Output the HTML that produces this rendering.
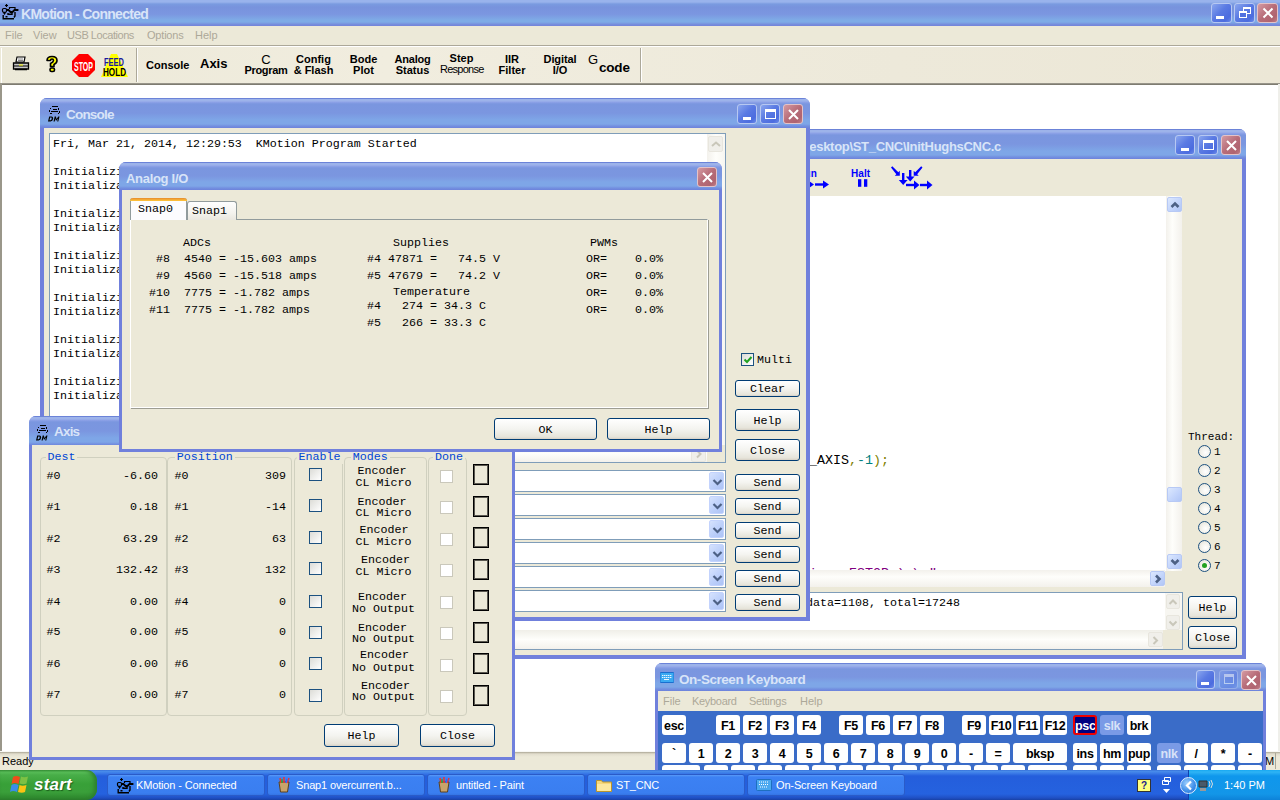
<!DOCTYPE html>
<html><head><meta charset="utf-8">
<style>
*{margin:0;padding:0;box-sizing:border-box}
html,body{width:1280px;height:800px;overflow:hidden;background:#fff;font-family:"Liberation Sans",sans-serif}
.a{position:absolute}
.m{position:absolute;font-family:"Liberation Mono",monospace;font-size:11.67px;white-space:pre;color:#000;line-height:14px}
.tbg{background:linear-gradient(#6B83D8 0,#6B83D8 1px,#9DB3EA 1px,#9DB3EA 3px,#8FA3E8 4px,#7A96DF 6px,#7B96E0 15px,#7EA6E7 22px,#7EA6E7 26px,#7390E0 28px,#6D82DB 30px)}
.win{position:absolute;background:#7080DC;border-radius:7px 7px 0 0;overflow:hidden}
.tb{position:absolute;left:0;top:0;right:0;height:30px}
.cl{position:absolute;left:4px;top:30px;right:4px;bottom:4px;background:#ECE9D8;overflow:hidden}
.ttl{position:absolute;top:8px;font-weight:bold;font-size:13px;color:#D8E4F8;white-space:pre;line-height:14px}
.xb{position:absolute;width:20px;height:20px;border:1px solid #B7C8F2;border-radius:3px;background:linear-gradient(135deg,#8AA6EE 0,#5A7AE3 45%,#4C6CDF 80%,#6A8AE8)}
.xc{border-color:#E3C3C8;background:linear-gradient(135deg,#D49AA2 0,#B76C78 50%,#B06470 80%,#BE7E88)}
.btn{position:absolute;padding-top:1px;border:1px solid #003C74;border-radius:3px;background:linear-gradient(#FFFFFF,#F4F4F0 50%,#E6E4DA 90%,#D6D0C5);font-family:"Liberation Mono",monospace;font-size:11.67px;text-align:center;color:#000;line-height:16px}
.tbt{position:absolute;font-weight:bold;font-size:11px;white-space:pre;line-height:11px;text-align:center;color:#000}
.mn{position:absolute;top:28px;font-size:11px;color:#ACA899;white-space:pre;line-height:14px}
.tk{position:absolute;top:774px;letter-spacing:-0.15px;height:22px;width:158px;border-radius:3px;background:linear-gradient(#5A9AF8 0,#3C81F3 2px,#3A7EF0 18px,#2E6AD9 22px);border:1px solid #2A5BC8;color:#fff;font-size:11px;line-height:20px;padding-left:28px;white-space:pre}
.sbb{width:15px;height:15px;border:1px solid #B7C9F5;border-radius:2px;background:linear-gradient(135deg,#DCE8FE,#C1D3FB 60%,#B1C6F6)}
.sbd{width:15px;height:17px;border:1px solid #E8E6DE;border-radius:2px;background:#F0EFEA}
.rad{position:absolute;width:13px;height:13px;border-radius:50%;border:1px solid #1C5180;background:radial-gradient(circle at 60% 60%,#FFFFFF,#F2F1EB 50%,#DCDAD0)}
.cmb{border:1px solid #7F9DB9;background:#fff}
.ddb{width:15px;height:18px;border-radius:2px;background:linear-gradient(135deg,#D5E2FD,#BACEFA 60%,#ADC3F5);border:1px solid #C3D3FD}
.gb{position:absolute;border:1px solid #D0D0BF;border-radius:4px}
.cb{position:absolute;width:13px;height:13px;border:1px solid #1C5180;background:linear-gradient(135deg,#DCDCD7,#FFFFFF)}
.cbd{position:absolute;width:13px;height:13px;border:1px solid #CAC8BB;background:#fff}
.key{position:absolute;padding-top:1px;background:#fff;border-radius:3px;font-weight:bold;font-size:12.5px;text-align:center;line-height:20px;color:#000;letter-spacing:-0.3px;white-space:pre;overflow:hidden}
</style></head><body>
<!-- ===== main title ===== -->
<div class="a" style="left:0;top:0;width:1280px;height:26px;background:linear-gradient(#99B3EC 0,#99B3EC 2px,#7A9BE0 4px,#7893DD 7px,#7B96E0 14px,#7EABE6 20px,#7EABE6 22px,#7587DA 25px,#7386DA 26px)"></div>
<svg class="a" style="left:0px;top:2px" width="20" height="19" viewBox="0 0 20 19"><g fill="none" stroke="#000" stroke-width="1.2"><path d="M5 3.5h3M6.5 2v3"/><rect x="2.5" y="6.5" width="4" height="3.8" rx="1.2"/><path d="M3.5 10.5l1 1.5 1-1.5M9.5 7V5.5h5.5V7"/><path d="M6.5 8h2l2 2h2l2-2h3V7" stroke-width="1.8"/></g><g fill="none" stroke="#000" stroke-width="1.4"><path d="M8 11v1.2h4V11M15 10v4l-1 1.5M3.2 13v3.8h10.8M5.5 14.8h2"/></g></svg>
<div class="ttl" style="left:21px;top:6.5px;font-size:14px;letter-spacing:-0.72px">KMotion - Connected</div>
<div class="xb" style="left:1211px;top:3px;width:21px;height:20px"><div class="a" style="left:4px;top:12px;width:8px;height:3px;background:#fff"></div></div>
<div class="xb" style="left:1234px;top:3px;width:21px;height:20px"><div class="a" style="left:8px;top:3px;width:8px;height:7px;border:1px solid #fff;border-top-width:2px"></div><div class="a" style="left:4px;top:7px;width:8px;height:7px;border:1px solid #fff;border-top-width:2px;background:#5070E0"></div></div>
<div class="xb xc" style="left:1257px;top:3px;width:21px;height:20px"><svg class="a" style="left:4px;top:3px" width="12" height="12"><path d="M1.5 1.5l9 9M10.5 1.5l-9 9" stroke="#fff" stroke-width="2"/></svg></div>
<!-- ===== menu ===== -->
<div class="a" style="left:0;top:26px;width:1280px;height:20px;background:#ECE9D8"></div>
<div class="mn" style="left:5px">File</div>
<div class="mn" style="left:33px">View</div>
<div class="mn" style="left:67px;letter-spacing:-0.45px">USB Locations</div>
<div class="mn" style="left:147px;letter-spacing:-0.2px">Options</div>
<div class="mn" style="left:195px">Help</div>
<div class="a" style="left:0;top:45px;width:1280px;height:1px;background:#ACA899"></div>
<div class="a" style="left:0;top:46px;width:1280px;height:1px;background:#fff"></div>
<!-- ===== toolbar ===== -->
<div class="a" style="left:0;top:47px;width:1280px;height:37px;background:linear-gradient(90deg,#ECE9D8,#F1EDDF 30%,#EDE9DA 70%,#ECE7D6)"></div>
<div class="a" style="left:0;top:83px;width:1280px;height:2px;background:linear-gradient(#A5A297,#716F64)"></div>
<div class="a" style="left:1px;top:48px;width:1px;height:35px;background:#fff"></div>
<div class="a" style="left:136px;top:48px;width:1px;height:34px;background:#ACA899"></div>
<div class="a" style="left:137px;top:48px;width:1px;height:34px;background:#fff"></div>
<div class="a" style="left:640px;top:48px;width:1px;height:34px;background:#ACA899"></div>
<div class="a" style="left:641px;top:48px;width:1px;height:34px;background:#fff"></div>
<!-- printer -->
<svg class="a" style="left:12px;top:56px" width="18" height="16" viewBox="0 0 18 16"><path d="M5 1h8l-1 5H4z" fill="#fff" stroke="#000" stroke-width="1.2"/><path d="M6 3h5M6 4.5h5" stroke="#888"/><path d="M1.5 7h15v6h-15z" fill="#C8C8C8" stroke="#000" stroke-width="1.3"/><path d="M2 10h14" stroke="#000"/><path d="M7 9h4" stroke="#FF0"/><path d="M3 13.5h12" stroke="#000" stroke-width="1.5"/></svg>
<!-- help ? -->
<svg class="a" style="left:45px;top:55px" width="14" height="18" viewBox="0 0 14 18"><path d="M2 5.5Q2 1.5 7 1.5T12 5.5Q12 8 9 9.5V11.5H5.5V8.5Q8.5 7 8.5 5.5T7 4T5.5 5.5z" fill="#FF0" stroke="#000" stroke-width="1.6" stroke-linejoin="round"/><rect x="5" y="13" width="4.5" height="3.5" rx="1.5" fill="#FF0" stroke="#000" stroke-width="1.6"/></svg>
<!-- stop -->
<svg class="a" style="left:72px;top:54px" width="23" height="23" viewBox="0 0 23 23"><path d="M7 0h9l7 7v9l-7 7H7l-7-7V7z" fill="#F00"/><text x="11.5" y="16.5" font-family="Liberation Sans" font-weight="bold" font-size="12" fill="#fff" text-anchor="middle" textLength="19" lengthAdjust="spacingAndGlyphs">STOP</text></svg>
<!-- feed hold -->
<svg class="a" style="left:101px;top:53px" width="27" height="24" viewBox="0 0 27 24"><path d="M10 1h6l11 23H0z" fill="#FF0"/><text x="13" y="13" font-family="Liberation Sans" font-weight="bold" font-size="10" fill="#1A1A9A" text-anchor="middle" textLength="20" lengthAdjust="spacingAndGlyphs">FEED</text><text x="13.5" y="23" font-family="Liberation Sans" font-weight="bold" font-size="10" fill="#000" text-anchor="middle" textLength="23" lengthAdjust="spacingAndGlyphs">HOLD</text></svg>
<div class="tbt" style="left:146px;top:60px">Console</div>
<div class="tbt" style="left:200px;top:57px;font-size:13px;line-height:13px">Axis</div>
<div class="tbt" style="left:244px;top:54px;font-weight:normal;font-size:13px;line-height:12px;width:44px">C</div>
<div class="tbt" style="left:244px;top:65px;width:44px;letter-spacing:-0.3px">Program</div>
<div class="tbt" style="left:293px;top:54px;width:41px">Config</div>
<div class="tbt" style="left:293px;top:65px;width:41px">&amp; Flash</div>
<div class="tbt" style="left:349px;top:54px;width:29px">Bode</div>
<div class="tbt" style="left:349px;top:65px;width:29px">Plot</div>
<div class="tbt" style="left:394px;top:54px;width:37px;letter-spacing:-0.2px">Analog</div>
<div class="tbt" style="left:394px;top:65px;width:37px">Status</div>
<div class="tbt" style="left:440px;top:53px;width:43px">Step</div>
<div class="tbt" style="left:440px;top:64px;width:43px;font-weight:normal;letter-spacing:-0.75px">Response</div>
<div class="tbt" style="left:498px;top:54px;width:28px">IIR</div>
<div class="tbt" style="left:498px;top:65px;width:28px">Filter</div>
<div class="tbt" style="left:543px;top:54px;width:34px;letter-spacing:-0.1px">Digital</div>
<div class="tbt" style="left:543px;top:65px;width:34px">I/O</div>
<div class="tbt" style="left:588px;top:53px;font-weight:normal;font-size:13px;line-height:13px">G</div>
<div class="tbt" style="left:599px;top:61px;font-size:13.5px;line-height:13px;letter-spacing:-0.2px">code</div>
<!-- ===== mdi client frame ===== -->
<div class="a" style="left:0;top:84px;width:2px;height:667px;background:#9A978A"></div>
<div class="a" style="left:1278px;top:84px;width:2px;height:667px;background:#EFEFEA"></div>
<!-- ===== status bar ===== -->
<div class="a" style="left:0;top:751px;width:1280px;height:19px;background:linear-gradient(#F8F8F4 0,#F8F8F4 1px,#A9A595 1px,#C9C4B2 2px,#E2DECE 3px,#ECE9D8 6px)"></div>
<div class="a" style="left:2px;top:755px;font-size:11px;line-height:13px">Ready</div>
<div class="a" style="left:1249px;top:755px;font-size:11px;line-height:13px">NUM</div>
<div class="a" style="left:1275px;top:753px;width:1px;height:16px;background:#ACA899"></div>

<!-- ===== C program window ===== -->
<div class="win" style="left:420px;top:129px;width:826px;height:530px">
 <div class="tb tbg"></div>
 <div class="ttl" style="right:245px;top:11px;letter-spacing:-0.3px">C:\Documents and Settings\Hugh\Desktop\ST_CNC\InitHughsCNC.c</div>
 <div class="xb" style="left:755px;top:6px"><div class="a" style="left:5px;top:12px;width:8px;height:3px;background:#fff"></div></div>
 <div class="xb" style="left:778px;top:6px"><div class="a" style="left:4px;top:4px;width:11px;height:10px;border:1px solid #fff;border-top-width:3px"></div></div>
 <div class="xb xc" style="left:801px;top:6px"><svg class="a" style="left:3px;top:3px" width="13" height="13"><path d="M2 2l9 9M11 2l-9 9" stroke="#fff" stroke-width="2"/></svg></div>
 <div class="cl">
  <!-- toolbar icons -->
  <div class="a" style="left:373px;top:10px;font-size:10px;font-weight:bold;color:#00F;line-height:10px;letter-spacing:0.2px">Run</div>
  <div class="a" style="left:427px;top:10px;font-size:10px;font-weight:bold;color:#00F;line-height:10px;letter-spacing:0.1px">Halt</div>
  <svg class="a" style="left:0;top:0" width="600" height="36"><g transform="translate(-424,-159)" fill="#00F" stroke="none">
   <path d="M809 181l5 3.5-5 3.5z"/><rect x="815" y="183.3" width="9" height="2.4"/><path d="M823 180.5l6 4-6 4z"/>
   <rect x="858" y="179.2" width="3.3" height="7.6"/><rect x="864" y="179.2" width="3.3" height="7.6"/>
   <path d="M891 167.5l1.3-1.3 6 6 1.5-1.5v5h-5l1.5-1.5z"/>
   <path d="M922.5 167.5l-1.3-1.3-6 6-1.5-1.5v5h5l-1.5-1.5z"/>
   <rect x="902" y="173" width="2.4" height="8"/><path d="M898.8 180h8.8l-4.4 5z"/>
   <rect x="909" y="170" width="2.4" height="7.5"/><path d="M905.8 176.5h8.8l-4.4 5z"/>
   <rect x="906" y="183.8" width="9" height="2.4"/><path d="M914 180.5l5.5 4.5-5.5 4.5z"/>
   <rect x="920" y="183.8" width="8" height="2.4"/><path d="M927 180.5l5.5 4.5-5.5 4.5z"/>
  </g></svg>
  <!-- editor -->
  <div class="a" style="left:4px;top:37px;width:742px;height:375px;background:#fff"></div>
  <div class="m" style="left:385px;top:294.5px;color:#000;font-size:13.33px">_AXIS<span style="color:#808000">,</span><span style="color:#008080">-1</span><span style="color:#808000">);</span></div>
  <div class="m" style="left:369px;top:408px;color:#800080;font-size:13.33px">ction  ESTOP ) \n"</div>
  
  <!-- vscroll -->
  <div class="a" style="left:742px;top:37px;width:16px;height:375px;background:linear-gradient(90deg,#F3F1EC,#FEFEFB 40%,#F3F1EC)"></div>
  <div class="a sbb" style="left:743px;top:38px"><svg width="14" height="14"><path d="M3.5 9l3.5-3.5 3.5 3.5" stroke="#4D6185" stroke-width="2.6" fill="none"/></svg></div>
  <div class="a sbb" style="left:743px;top:328px"></div>
  <div class="a sbb" style="left:743px;top:395px"><svg width="14" height="14"><path d="M3.5 5l3.5 3.5 3.5-3.5" stroke="#4D6185" stroke-width="2.6" fill="none"/></svg></div>
  <!-- hscroll -->
  <div class="a" style="left:4px;top:411px;width:737px;height:17px;background:linear-gradient(#F3F1EC,#FEFEFB 40%,#F3F1EC)"></div>
  <div class="a sbb" style="left:726px;top:412px"><svg width="14" height="14"><path d="M5 3.5l3.5 3.5-3.5 3.5" stroke="#4D6185" stroke-width="2.6" fill="none"/></svg></div>
  <!-- thread -->
  <div class="m" style="left:764px;top:271px;font-size:11px">Thread:</div>
  <div class="rad" style="left:774px;top:286px"></div><div class="m" style="left:790px;top:286px;font-size:11px">1</div>
  <div class="rad" style="left:774px;top:305px"></div><div class="m" style="left:790px;top:305px;font-size:11px">2</div>
  <div class="rad" style="left:774px;top:324px"></div><div class="m" style="left:790px;top:324px;font-size:11px">3</div>
  <div class="rad" style="left:774px;top:343px"></div><div class="m" style="left:790px;top:343px;font-size:11px">4</div>
  <div class="rad" style="left:774px;top:362px"></div><div class="m" style="left:790px;top:362px;font-size:11px">5</div>
  <div class="rad" style="left:774px;top:381px"></div><div class="m" style="left:790px;top:381px;font-size:11px">6</div>
  <div class="rad" style="left:774px;top:400px"><div class="a" style="left:3px;top:3px;width:5px;height:5px;border-radius:50%;background:#21A121"></div></div><div class="m" style="left:790px;top:400px;font-size:11px">7</div>
  <!-- output -->
  <div class="a" style="left:4px;top:433px;width:755px;height:58px;background:#fff;border:1px solid #7F9DB9"></div>
  <div class="m" style="left:382px;top:437px">data=1108, total=17248</div>
  <div class="a" style="left:741px;top:434px;width:17px;height:38px;background:#F7F6F1"></div>
  <div class="a sbd" style="left:742px;top:435px;width:14px;height:15px"><svg width="12" height="13"><path d="M2.5 8l3.5-3.5 3.5 3.5" stroke="#C9C7BA" stroke-width="2" fill="none"/></svg></div>
  <div class="a sbd" style="left:742px;top:456px;width:14px;height:15px"><svg width="12" height="13"><path d="M2.5 4.5l3.5 3.5 3.5-3.5" stroke="#C9C7BA" stroke-width="2" fill="none"/></svg></div>
  <div class="a" style="left:5px;top:471px;width:734px;height:19px;background:linear-gradient(#F0EFE8,#FEFEFB 50%,#F3F1EC)"></div>
  <div class="a" style="left:739px;top:471px;width:19px;height:19px;background:#ECE9D8"></div>
  <div class="a sbd" style="left:724px;top:473px;width:15px;height:15px"><svg width="13" height="13"><path d="M4.5 3l3.5 3.5-3.5 3.5" stroke="#C9C7BA" stroke-width="2" fill="none"/></svg></div>
  <div class="btn" style="left:764px;top:437px;width:49px;height:23px;line-height:21px">Help</div>
  <div class="btn" style="left:764px;top:467px;width:49px;height:23px;line-height:21px">Close</div>
 </div>
</div>

<!-- ===== Console window ===== -->
<div class="win" style="left:40px;top:98px;width:770px;height:523px">
 <div class="tb tbg"></div>
 <svg class="a" style="left:7px;top:7px" width="14" height="18" viewBox="0 0 14 18"><g fill="#000"><path d="M5 1h6v1H5zM3 3h1v1H3zM6 4h4v1H6zM11 3h1v2h-1zM4 6h7v1H4zM2 5h1v2H2zM12 6h1v2h-1zM3 8h2v1H3zM11 8h1v1h-1z"/><path d="M1 16.5l1.2-5h2.3q2 0 1.6 2.6T3.2 16.5zM2.5 15.3h.8q1.1 0 1.4-1.5t-.9-1.3h-.6zM6.5 16.5l1.2-5h1.2l.6 2.5 1.8-2.5h1.2l-1.2 5H10.2l.7-3-1.9 2.6-.6-2.6-.7 3z"/></g></svg>
 <div class="ttl" style="left:26px;top:10px;font-size:13.5px;letter-spacing:-0.8px">Console</div>
 <div class="xb" style="left:697px;top:6px"><div class="a" style="left:5px;top:12px;width:8px;height:3px;background:#fff"></div></div>
 <div class="xb" style="left:720px;top:6px"><div class="a" style="left:4px;top:4px;width:11px;height:10px;border:1px solid #fff;border-top-width:3px"></div></div>
 <div class="xb xc" style="left:743px;top:6px"><svg class="a" style="left:3px;top:3px" width="13" height="13"><path d="M2 2l9 9M11 2l-9 9" stroke="#fff" stroke-width="2"/></svg></div>
 <div class="cl">
  <div class="a" style="left:5px;top:5px;width:677px;height:330px;background:#fff;border:1px solid #7F9DB9;overflow:hidden">
   <div class="m" style="left:3px;top:3px">Fri, Mar 21, 2014, 12:29:53  KMotion Program Started

Initializing Axis 0 ...
Initialization of Axis 0 complete

Initializing Axis 1 ...
Initialization of Axis 1 complete

Initializing Axis 2 ...
Initialization of Axis 2 complete

Initializing Axis 3 ...
Initialization of Axis 3 complete

Initializing Axis 4 ...
Initialization of Axis 4 complete

Initializing Axis 5 ...
Initialization of Axis 5 complete

Initializing Axis 6 ...</div>
   <div class="a" style="left:657px;top:0;width:18px;height:312px;background:linear-gradient(90deg,#F3F1EC,#FEFEFB 50%,#F7F6F1)"></div>
   <div class="a sbd" style="left:658px;top:2px;height:16px"><svg width="14" height="15"><path d="M3 9l4-3.5 4 3.5" stroke="#C9C7BA" stroke-width="2" fill="none"/></svg></div>
   <div class="a" style="left:0;top:311px;width:675px;height:17px;background:linear-gradient(#F0EFE8,#FEFEFB 50%,#F3F1EC)"></div>
   <div class="a sbd" style="left:641px;top:312px;height:16px"><svg width="14" height="15"><path d="M5 3.5l3.5 3.5-3.5 3.5" stroke="#C9C7BA" stroke-width="2" fill="none"/></svg></div>
   <div class="a" style="left:657px;top:311px;width:18px;height:17px;background:#ECE9D8"></div>
  </div>
  <div class="a" style="left:697px;top:225px;width:13px;height:13px;border:1px solid #1C5180;background:linear-gradient(135deg,#DCDCD7,#fff)"><svg class="a" style="left:1px;top:1px" width="10" height="10"><path d="M1.5 4.5l2.5 2.5 4.5-5" stroke="#21A121" stroke-width="2" fill="none"/></svg></div>
  <div class="m" style="left:713px;top:225px">Multi</div>
  <div class="btn" style="left:691px;top:252px;width:65px;height:17px;line-height:15px">Clear</div>
  <div class="btn" style="left:691px;top:281px;width:65px;height:22px;line-height:20px">Help</div>
  <div class="btn" style="left:691px;top:311px;width:65px;height:22px;line-height:20px">Close</div>
<div class="a cmb" style="left:5px;top:342px;width:677px;height:22px"><div class="a ddb" style="left:659px;top:1px"><svg width="15" height="18"><path d="M3.5 7l4 4 4-4" stroke="#4D6185" stroke-width="2.2" fill="none"/></svg></div></div>
<div class="btn" style="left:691px;top:346px;width:65px;height:17px;line-height:15px">Send</div>
<div class="a cmb" style="left:5px;top:366px;width:677px;height:22px"><div class="a ddb" style="left:659px;top:1px"><svg width="15" height="18"><path d="M3.5 7l4 4 4-4" stroke="#4D6185" stroke-width="2.2" fill="none"/></svg></div></div>
<div class="btn" style="left:691px;top:370px;width:65px;height:17px;line-height:15px">Send</div>
<div class="a cmb" style="left:5px;top:390px;width:677px;height:22px"><div class="a ddb" style="left:659px;top:1px"><svg width="15" height="18"><path d="M3.5 7l4 4 4-4" stroke="#4D6185" stroke-width="2.2" fill="none"/></svg></div></div>
<div class="btn" style="left:691px;top:394px;width:65px;height:17px;line-height:15px">Send</div>
<div class="a cmb" style="left:5px;top:414px;width:677px;height:22px"><div class="a ddb" style="left:659px;top:1px"><svg width="15" height="18"><path d="M3.5 7l4 4 4-4" stroke="#4D6185" stroke-width="2.2" fill="none"/></svg></div></div>
<div class="btn" style="left:691px;top:418px;width:65px;height:17px;line-height:15px">Send</div>
<div class="a cmb" style="left:5px;top:438px;width:677px;height:22px"><div class="a ddb" style="left:659px;top:1px"><svg width="15" height="18"><path d="M3.5 7l4 4 4-4" stroke="#4D6185" stroke-width="2.2" fill="none"/></svg></div></div>
<div class="btn" style="left:691px;top:442px;width:65px;height:17px;line-height:15px">Send</div>
<div class="a cmb" style="left:5px;top:462px;width:677px;height:22px"><div class="a ddb" style="left:659px;top:1px"><svg width="15" height="18"><path d="M3.5 7l4 4 4-4" stroke="#4D6185" stroke-width="2.2" fill="none"/></svg></div></div>
<div class="btn" style="left:691px;top:466px;width:65px;height:17px;line-height:15px">Send</div>
 </div>
</div>


<!-- ===== Axis window ===== -->
<div class="win" style="left:29px;top:416px;width:486px;height:344px">
 <div class="tb tbg" style="height:29px"></div>
 <svg class="a" style="left:6px;top:8px" width="14" height="18" viewBox="0 0 14 18"><g fill="#000"><path d="M5 1h6v1H5zM3 3h1v1H3zM6 4h4v1H6zM11 3h1v2h-1zM4 6h7v1H4zM2 5h1v2H2zM12 6h1v2h-1zM3 8h2v1H3zM11 8h1v1h-1z"/><path d="M1 16.5l1.2-5h2.3q2 0 1.6 2.6T3.2 16.5zM2.5 15.3h.8q1.1 0 1.4-1.5t-.9-1.3h-.6zM6.5 16.5l1.2-5h1.2l.6 2.5 1.8-2.5h1.2l-1.2 5H10.2l.7-3-1.9 2.6-.6-2.6-.7 3z"/></g></svg>
 <div class="ttl" style="left:25px;top:9px;font-size:13.5px;letter-spacing:-0.8px">Axis</div>
 <div class="cl" style="left:3px;top:29px;right:3px;bottom:3px">
  <div class="gb" style="left:7.75px;top:12px;width:126.75px;height:259px"></div>
  <div class="m" style="left:13.5px;top:4.5px;color:#0046D5;background:#ECE9D8;padding:0 2px">Dest</div>
  <div class="gb" style="left:135.3px;top:12px;width:124.69999999999999px;height:259px"></div>
  <div class="m" style="left:142.8px;top:4.5px;color:#0046D5;background:#ECE9D8;padding:0 2px">Position</div>
  <div class="gb" style="left:261.5px;top:12px;width:49.5px;height:259px"></div>
  <div class="m" style="left:264.6px;top:4.5px;color:#0046D5;background:#ECE9D8;padding:0 2px">Enable</div>
  <div class="gb" style="left:312.3px;top:12px;width:83.09999999999997px;height:259px"></div>
  <div class="m" style="left:318.8px;top:4.5px;color:#0046D5;background:#ECE9D8;padding:0 2px">Modes</div>
  <div class="gb" style="left:396px;top:12px;width:39px;height:259px"></div>
  <div class="m" style="left:401px;top:4.5px;color:#0046D5;background:#ECE9D8;padding:0 2px">Done</div>
  <div class="m" style="left:14.5px;top:23.7px">#0</div>
  <div class="m" style="left:28px;width:98px;text-align:right;top:23.7px">-6.60</div>
  <div class="m" style="left:142.5px;top:23.7px">#0</div>
  <div class="m" style="left:158px;width:96px;text-align:right;top:23.7px">309</div>
  <div class="cb" style="left:277px;top:23.0px"></div>
  <div class="cbd" style="left:408px;top:24.5px"></div>
  <div class="a" style="left:441px;top:19px;width:16px;height:21px;border:1px solid #000;box-shadow:inset 0 0 0 1px #5A5850"></div>
  <div class="m" style="left:325.5px;top:18.9px">Encoder</div>
  <div class="m" style="left:323.5px;top:30.6px">CL Micro</div>
  <div class="m" style="left:14.5px;top:54.6px">#1</div>
  <div class="m" style="left:28px;width:98px;text-align:right;top:54.6px">0.18</div>
  <div class="m" style="left:142.5px;top:54.6px">#1</div>
  <div class="m" style="left:158px;width:96px;text-align:right;top:54.6px">-14</div>
  <div class="cb" style="left:277px;top:54.0px"></div>
  <div class="cbd" style="left:408px;top:55.5px"></div>
  <div class="a" style="left:441px;top:51px;width:16px;height:21px;border:1px solid #000;box-shadow:inset 0 0 0 1px #5A5850"></div>
  <div class="m" style="left:325.5px;top:50.0px">Encoder</div>
  <div class="m" style="left:323.5px;top:60.7px">CL Micro</div>
  <div class="m" style="left:14.5px;top:86.5px">#2</div>
  <div class="m" style="left:28px;width:98px;text-align:right;top:86.5px">63.29</div>
  <div class="m" style="left:142.5px;top:86.5px">#2</div>
  <div class="m" style="left:158px;width:96px;text-align:right;top:86.5px">63</div>
  <div class="cb" style="left:277px;top:86.0px"></div>
  <div class="cbd" style="left:408px;top:87.5px"></div>
  <div class="a" style="left:441px;top:82px;width:16px;height:21px;border:1px solid #000;box-shadow:inset 0 0 0 1px #5A5850"></div>
  <div class="m" style="left:327.5px;top:77.8px">Encoder</div>
  <div class="m" style="left:323.5px;top:89.6px">CL Micro</div>
  <div class="m" style="left:14.5px;top:117.7px">#3</div>
  <div class="m" style="left:28px;width:98px;text-align:right;top:117.7px">132.42</div>
  <div class="m" style="left:142.5px;top:117.7px">#3</div>
  <div class="m" style="left:158px;width:96px;text-align:right;top:117.7px">132</div>
  <div class="cb" style="left:277px;top:117.0px"></div>
  <div class="cbd" style="left:408px;top:118.5px"></div>
  <div class="a" style="left:441px;top:114px;width:16px;height:21px;border:1px solid #000;box-shadow:inset 0 0 0 1px #5A5850"></div>
  <div class="m" style="left:329.0px;top:107.8px">Encoder</div>
  <div class="m" style="left:323.5px;top:120.0px">CL Micro</div>
  <div class="m" style="left:14.5px;top:149.5px">#4</div>
  <div class="m" style="left:28px;width:98px;text-align:right;top:149.5px">0.00</div>
  <div class="m" style="left:142.5px;top:149.5px">#4</div>
  <div class="m" style="left:158px;width:96px;text-align:right;top:149.5px">0</div>
  <div class="cb" style="left:277px;top:149.5px"></div>
  <div class="cbd" style="left:408px;top:151.0px"></div>
  <div class="a" style="left:441px;top:145px;width:16px;height:21px;border:1px solid #000;box-shadow:inset 0 0 0 1px #5A5850"></div>
  <div class="m" style="left:326.0px;top:144.8px">Encoder</div>
  <div class="m" style="left:320.0px;top:156.5px">No Output</div>
  <div class="m" style="left:14.5px;top:180.3px">#5</div>
  <div class="m" style="left:28px;width:98px;text-align:right;top:180.3px">0.00</div>
  <div class="m" style="left:142.5px;top:180.3px">#5</div>
  <div class="m" style="left:158px;width:96px;text-align:right;top:180.3px">0</div>
  <div class="cb" style="left:277px;top:180.7px"></div>
  <div class="cbd" style="left:408px;top:182.2px"></div>
  <div class="a" style="left:441px;top:177px;width:16px;height:21px;border:1px solid #000;box-shadow:inset 0 0 0 1px #5A5850"></div>
  <div class="m" style="left:326.0px;top:175.7px">Encoder</div>
  <div class="m" style="left:320.0px;top:186.6px">No Output</div>
  <div class="m" style="left:14.5px;top:212.0px">#6</div>
  <div class="m" style="left:28px;width:98px;text-align:right;top:212.0px">0.00</div>
  <div class="m" style="left:142.5px;top:212.0px">#6</div>
  <div class="m" style="left:158px;width:96px;text-align:right;top:212.0px">0</div>
  <div class="cb" style="left:277px;top:212.3px"></div>
  <div class="cbd" style="left:408px;top:213.8px"></div>
  <div class="a" style="left:441px;top:208px;width:16px;height:21px;border:1px solid #000;box-shadow:inset 0 0 0 1px #5A5850"></div>
  <div class="m" style="left:328.0px;top:203.4px">Encoder</div>
  <div class="m" style="left:320.0px;top:215.9px">No Output</div>
  <div class="m" style="left:14.5px;top:243.0px">#7</div>
  <div class="m" style="left:28px;width:98px;text-align:right;top:243.0px">0.00</div>
  <div class="m" style="left:142.5px;top:243.0px">#7</div>
  <div class="m" style="left:158px;width:96px;text-align:right;top:243.0px">0</div>
  <div class="cb" style="left:277px;top:243.6px"></div>
  <div class="cbd" style="left:408px;top:245.1px"></div>
  <div class="a" style="left:441px;top:240px;width:16px;height:21px;border:1px solid #000;box-shadow:inset 0 0 0 1px #5A5850"></div>
  <div class="m" style="left:329.0px;top:233.5px">Encoder</div>
  <div class="m" style="left:320.0px;top:245.2px">No Output</div>

  <div class="btn" style="left:292px;top:279px;width:75px;height:23px;line-height:21px">Help</div>
  <div class="btn" style="left:388px;top:279px;width:75px;height:23px;line-height:21px">Close</div>
 </div>
</div>
<!-- ===== Analog I/O dialog ===== -->
<div class="win" style="left:119px;top:162px;width:603px;height:290px;background:#7080DC">
 <div class="tb tbg" style="height:28px;background:linear-gradient(#6B83D8 0,#6B83D8 1px,#9DB3EA 1px,#9DB3EA 3px,#8FA3E8 4px,#7A96DF 6px,#7B96E0 14px,#7EA6E7 20px,#7EA6E7 24px,#7390E0 26px,#6D82DB 28px)"></div>
 <div class="ttl" style="left:7px;top:10px;font-size:13px;letter-spacing:-0.3px">Analog I/O</div>
 <div class="xb xc" style="left:578px;top:5px"><svg class="a" style="left:3px;top:3px" width="13" height="13"><path d="M2 2l9 9M11 2l-9 9" stroke="#fff" stroke-width="2"/></svg></div>
 <div class="cl" style="left:3px;top:28px;right:3px;bottom:3px">
  <div class="a" style="left:8px;top:29px;width:578px;height:189px;border:1px solid #fff;border-top-color:#919B9C;box-shadow:1px 1px 0 #9D9D92;background:#ECE9D8"></div>
  <div class="a" style="left:65px;top:11px;width:50px;height:19px;border:1px solid #919B9C;border-bottom:none;border-radius:3px 3px 0 0;background:linear-gradient(#FEFEFE,#F4F3EE 60%,#E9E7DF)"></div>
  <div class="m" style="left:70px;top:14px">Snap1</div>
  <div class="a" style="left:8px;top:8px;width:57px;height:22px;border:1px solid #919B9C;border-bottom:none;border-radius:3px 3px 0 0;background:#FCFCFE;border-top:none"></div>
  <div class="a" style="left:8px;top:8px;width:57px;height:3px;border-radius:3px 3px 0 0;background:linear-gradient(#E68B2C,#FFC73C)"></div>
  <div class="m" style="left:16px;top:12px">Snap0</div>
  <div class="m" style="left:61px;top:45.50px">ADCs</div>
  <div class="m" style="left:34px;top:61.75px">#8  4540 = -15.603 amps</div>
  <div class="m" style="left:34px;top:78.50px">#9  4560 = -15.518 amps</div>
  <div class="m" style="left:27px;top:95.50px">#10  7775 = -1.782 amps</div>
  <div class="m" style="left:27px;top:112.50px">#11  7775 = -1.782 amps</div>
  <div class="m" style="left:271px;top:45.50px">Supplies</div>
  <div class="m" style="left:245px;top:61.75px">#4 47871 =   74.5 V</div>
  <div class="m" style="left:245px;top:78.50px">#5 47679 =   74.2 V</div>
  <div class="m" style="left:271px;top:94.75px">Temperature</div>
  <div class="m" style="left:245px;top:109.25px">#4   274 = 34.3 C</div>
  <div class="m" style="left:245px;top:126.25px">#5   266 = 33.3 C</div>
  <div class="m" style="left:468px;top:45.50px">PWMs</div>
  <div class="m" style="left:464px;top:61.75px">OR=    0.0%</div>
  <div class="m" style="left:464px;top:78.50px">OR=    0.0%</div>
  <div class="m" style="left:464px;top:95.50px">OR=    0.0%</div>
  <div class="m" style="left:464px;top:112.50px">OR=    0.0%</div>

  <div class="btn" style="left:372px;top:228px;width:103px;height:22px;line-height:20px">OK</div>
  <div class="btn" style="left:485px;top:228px;width:103px;height:22px;line-height:20px">Help</div>
 </div>
</div>

<!-- ===== OSK ===== -->
<div class="win" style="left:655px;top:663px;width:611px;height:137px">
 <div class="tb tbg" style="height:28px;background:linear-gradient(#6B83D8 0,#6B83D8 1px,#9DB3EA 1px,#9DB3EA 3px,#8FA3E8 4px,#7A96DF 6px,#7B96E0 14px,#7EA6E7 20px,#7EA6E7 24px,#7390E0 26px,#6D82DB 28px)"></div>
 <svg class="a" style="left:5px;top:9px" width="15" height="11" viewBox="0 0 15 11"><rect x="0" y="0" width="14" height="11" rx="1" fill="#1A6FD0"/><rect x="0.5" y="1" width="13" height="9" fill="#3BAAF2"/><path d="M2 3.5h1.4M4 3.5h1.4M6 3.5h1.4M8 3.5h1.4M10 3.5h1.4M2 5.5h1.4M4 5.5h1.4M6 5.5h1.4M8 5.5h1.4M10 5.5h1.4M4 7.5h5" stroke="#E8F6FF" stroke-width="1.2"/></svg>
 <div class="ttl" style="left:24px;top:10px;font-size:13.5px;letter-spacing:-0.45px">On-Screen Keyboard</div>
 <div class="xb" style="left:541px;top:7px;width:19px;height:19px"><div class="a" style="left:4px;top:11px;width:8px;height:3px;background:#fff"></div></div>
 <div class="xb" style="left:564px;top:7px;width:19px;height:19px;opacity:0.45"><div class="a" style="left:4px;top:3px;width:10px;height:10px;border:1px solid #fff;border-top-width:3px"></div></div>
 <div class="xb xc" style="left:586px;top:7px;width:20px;height:20px"><svg class="a" style="left:3px;top:3px" width="13" height="13"><path d="M2 2l9 9M11 2l-9 9" stroke="#fff" stroke-width="2"/></svg></div>
 <div class="a" style="left:3px;top:28px;width:605px;height:20px;background:#ECE9D8"></div>
 <div class="mn" style="left:8px;top:31px">File</div>
 <div class="mn" style="left:37px;top:31px;letter-spacing:-0.3px">Keyboard</div>
 <div class="mn" style="left:94px;top:31px;letter-spacing:-0.3px">Settings</div>
 <div class="mn" style="left:145px;top:31px">Help</div>
 <div class="a" style="left:3px;top:48px;width:605px;height:89px;background:#3A6CC8"></div>
  <div class="key" style="left:7px;top:52px;width:24px;height:20px;">esc</div>
  <div class="key" style="left:61px;top:52px;width:24px;height:20px;">F1</div>
  <div class="key" style="left:88px;top:52px;width:24px;height:20px;">F2</div>
  <div class="key" style="left:115px;top:52px;width:24px;height:20px;">F3</div>
  <div class="key" style="left:142px;top:52px;width:24px;height:20px;">F4</div>
  <div class="key" style="left:184px;top:52px;width:24px;height:20px;">F5</div>
  <div class="key" style="left:211px;top:52px;width:24px;height:20px;">F6</div>
  <div class="key" style="left:238px;top:52px;width:24px;height:20px;">F7</div>
  <div class="key" style="left:265px;top:52px;width:24px;height:20px;">F8</div>
  <div class="key" style="left:307px;top:52px;width:24px;height:20px;">F9</div>
  <div class="key" style="left:334px;top:52px;width:24px;height:20px;">F10</div>
  <div class="key" style="left:361px;top:52px;width:24px;height:20px;">F11</div>
  <div class="key" style="left:388px;top:52px;width:24px;height:20px;">F12</div>
  <div class="key" style="left:418px;top:52px;width:24px;height:20px;background:#000080;color:#fff;border:2px solid #E00;line-height:16px">psc</div>
  <div class="key" style="left:445px;top:52px;width:24px;height:20px;background:#7A9AE6;color:#D8E2F8">slk</div>
  <div class="key" style="left:472px;top:52px;width:24px;height:20px;">brk</div>
  <div class="key" style="left:7px;top:80px;width:24px;height:20px;">`</div>
  <div class="key" style="left:34px;top:80px;width:24px;height:20px;">1</div>
  <div class="key" style="left:61px;top:80px;width:24px;height:20px;">2</div>
  <div class="key" style="left:88px;top:80px;width:24px;height:20px;">3</div>
  <div class="key" style="left:115px;top:80px;width:24px;height:20px;">4</div>
  <div class="key" style="left:142px;top:80px;width:24px;height:20px;">5</div>
  <div class="key" style="left:169px;top:80px;width:24px;height:20px;">6</div>
  <div class="key" style="left:196px;top:80px;width:24px;height:20px;">7</div>
  <div class="key" style="left:223px;top:80px;width:24px;height:20px;">8</div>
  <div class="key" style="left:250px;top:80px;width:24px;height:20px;">9</div>
  <div class="key" style="left:277px;top:80px;width:24px;height:20px;">0</div>
  <div class="key" style="left:304px;top:80px;width:24px;height:20px;">-</div>
  <div class="key" style="left:331px;top:80px;width:24px;height:20px;">=</div>
  <div class="key" style="left:358px;top:80px;width:54px;height:20px;">bksp</div>
  <div class="key" style="left:418px;top:80px;width:24px;height:20px;">ins</div>
  <div class="key" style="left:445px;top:80px;width:24px;height:20px;">hm</div>
  <div class="key" style="left:472px;top:80px;width:24px;height:20px;">pup</div>
  <div class="key" style="left:502px;top:80px;width:24px;height:20px;background:#7A9AE6;color:#D8E2F8">nlk</div>
  <div class="key" style="left:529px;top:80px;width:24px;height:20px;">/</div>
  <div class="key" style="left:556px;top:80px;width:24px;height:20px;">*</div>
  <div class="key" style="left:583px;top:80px;width:24px;height:20px;">-</div>
  <div class="key" style="left:7px;top:102px;width:38px;height:20px;"></div>
  <div class="key" style="left:49px;top:102px;width:24px;height:20px;"></div>
  <div class="key" style="left:76px;top:102px;width:24px;height:20px;"></div>
  <div class="key" style="left:103px;top:102px;width:24px;height:20px;"></div>
  <div class="key" style="left:130px;top:102px;width:24px;height:20px;"></div>
  <div class="key" style="left:157px;top:102px;width:24px;height:20px;"></div>
  <div class="key" style="left:184px;top:102px;width:24px;height:20px;"></div>
  <div class="key" style="left:211px;top:102px;width:24px;height:20px;"></div>
  <div class="key" style="left:238px;top:102px;width:24px;height:20px;"></div>
  <div class="key" style="left:265px;top:102px;width:24px;height:20px;"></div>
  <div class="key" style="left:292px;top:102px;width:24px;height:20px;"></div>
  <div class="key" style="left:319px;top:102px;width:24px;height:20px;"></div>
  <div class="key" style="left:346px;top:102px;width:24px;height:20px;"></div>
  <div class="key" style="left:373px;top:102px;width:39px;height:20px;"></div>
  <div class="key" style="left:418px;top:102px;width:24px;height:20px;"></div>
  <div class="key" style="left:445px;top:102px;width:24px;height:20px;"></div>
  <div class="key" style="left:472px;top:102px;width:24px;height:20px;"></div>
  <div class="key" style="left:502px;top:102px;width:24px;height:20px;"></div>
  <div class="key" style="left:529px;top:102px;width:24px;height:20px;"></div>
  <div class="key" style="left:556px;top:102px;width:24px;height:20px;"></div>
  <div class="key" style="left:583px;top:102px;width:24px;height:20px;"></div>
</div>
<!-- ===== taskbar ===== -->
<div id="taskbar" class="a" style="left:0;top:770px;width:1280px;height:30px;background:linear-gradient(#3168D5 0,#4A8FEA 1px,#3D7DE8 3px,#245EDC 6px,#2562DF 24px,#1F4FC3 28px,#1941A5 30px)"></div>
<div class="a" style="left:0;top:770px;width:97px;height:30px;border-radius:0 11px 11px 0;background:linear-gradient(#3C9A3C 0,#5EC55E 2px,#48AE48 5px,#38A038 14px,#3A9F3A 22px,#2F8A2F 28px,#2A7A2A 30px);box-shadow:inset -3px 0 4px #2D7F2D"></div>
<svg class="a" style="left:10px;top:775px" width="20" height="19" viewBox="0 0 20 19"><path d="M3 2q3-2 7 0l-1.5 7q-4-2-7 0z" fill="#F04E1A"/><path d="M11 1.5q3 1.5 7 0l-1.5 7q-3 1.5-7 0z" fill="#7DC144"/><path d="M1.5 10q3-2 7 0L7 17q-4-2-7 0z" fill="#3A8DE8"/><path d="M9.5 10q3 1.5 7 0l-1.5 7q-3 1.5-7 0z" fill="#FBC313"/></svg>
<div class="a" style="left:34px;top:776px;font-size:17px;font-weight:bold;font-style:italic;color:#fff;line-height:18px;text-shadow:1px 1px 1px #1B5E1B;letter-spacing:0.2px">start</div>
<div class="tk" style="left:107px;padding-left:28px">KMotion - Connected</div>
<div class="tk" style="left:267px;padding-left:28px">Snap1 overcurrent.b...</div>
<div class="tk" style="left:427px;padding-left:28px">untitled - Paint</div>
<div class="tk" style="left:587px;padding-left:28px">ST_CNC</div>
<div class="tk" style="left:747px;padding-left:28px">On-Screen Keyboard</div>
<svg class="a" style="left:115px;top:776px" width="20" height="19" viewBox="0 0 20 19"><g fill="none" stroke="#000" stroke-width="1.2"><path d="M5 3.5h3M6.5 2v3"/><rect x="2.5" y="6.5" width="4" height="3.8" rx="1.2"/><path d="M3.5 10.5l1 1.5 1-1.5M9.5 7V5.5h5.5V7"/><path d="M6.5 8h2l2 2h2l2-2h3V7" stroke-width="1.8"/></g><g fill="none" stroke="#000" stroke-width="1.4"><path d="M8 11v1.2h4V11M15 10v4l-1 1.5M3.2 13v3.8h10.8M5.5 14.8h2"/></g></svg>
<svg class="a" style="left:277px;top:777px" width="14" height="16" viewBox="0 0 14 16"><path d="M2 5h10l-1.5 10h-7z" fill="#C9A36B" stroke="#5A4020"/><path d="M4 6l-1-5M7 6V0M10 6l2-5" stroke="#E33" stroke-width="1.5"/><path d="M5 6l0-4" stroke="#3A3" stroke-width="1.5"/><path d="M9 6l1-4" stroke="#36F" stroke-width="1.5"/></svg>
<svg class="a" style="left:437px;top:777px" width="14" height="16" viewBox="0 0 14 16"><path d="M2 5h10l-1.5 10h-7z" fill="#C9A36B" stroke="#5A4020"/><path d="M4 6l-1-5M7 6V0M10 6l2-5" stroke="#E33" stroke-width="1.5"/><path d="M5 6l0-4" stroke="#3A3" stroke-width="1.5"/><path d="M9 6l1-4" stroke="#36F" stroke-width="1.5"/></svg>
<svg class="a" style="left:596px;top:778px" width="16" height="14" viewBox="0 0 16 14"><path d="M0.5 2.5h5l1 1.5h9v9.5H0.5z" fill="#F5D77A" stroke="#B8942E"/><path d="M1 6h14v7H1z" fill="#FBE8A0"/></svg>
<svg class="a" style="left:756px;top:779px" width="16" height="12" viewBox="0 0 16 12"><rect x="0.5" y="0.5" width="15" height="11" rx="1" fill="#4AA8F0" stroke="#1E6FC0"/><path d="M3 3h10M3 5.5h10M4 8h8" stroke="#fff" stroke-dasharray="1 1"/></svg>
<!-- tray -->
<div class="a" style="left:1188px;top:770px;width:92px;height:30px;background:linear-gradient(#18A8F2 0,#2FB4F5 2px,#0F97EC 6px,#1396E8 24px,#0D82D8 30px);border-left:1px solid #1042AF"></div>
<div class="a" style="left:1180px;top:777px;width:17px;height:17px;border-radius:50%;background:radial-gradient(circle at 40% 35%,#9FD0FF,#3B8CE8 60%,#2A6FD0);border:1px solid #DDEEFF"></div>
<svg class="a" style="left:1184px;top:780px" width="10" height="11"><path d="M7 1.5L3 5.5l4 4" stroke="#fff" stroke-width="2.2" fill="none"/></svg>
<svg class="a" style="left:1198px;top:779px" width="16" height="14" viewBox="0 0 16 14"><path d="M1 2h8v6H1z" fill="#4A5A6A" stroke="#333"/><path d="M2 9h6v3H2z" fill="#999"/><path d="M11 2q2 3 0 6M13 1q3 4 0 8" stroke="#DDD" fill="none"/></svg>
<div class="a" style="left:1224px;top:779px;font-size:11px;color:#fff;line-height:13px">1:40 PM</div>
<div class="a" style="left:1137px;top:779px;width:14px;height:13px;background:#FFFF80;border:1px solid #333;font-size:10px;font-weight:bold;line-height:11px;text-align:center;color:#228">?</div>
<svg class="a" style="left:1161px;top:776px" width="11" height="18"><path d="M3.5 1.5h6v4h-6zM1.5 4.5h6v4h-6z" fill="none" stroke="#fff"/><path d="M2 13h7l-3.5 4z" fill="#fff"/></svg>
</body></html>
